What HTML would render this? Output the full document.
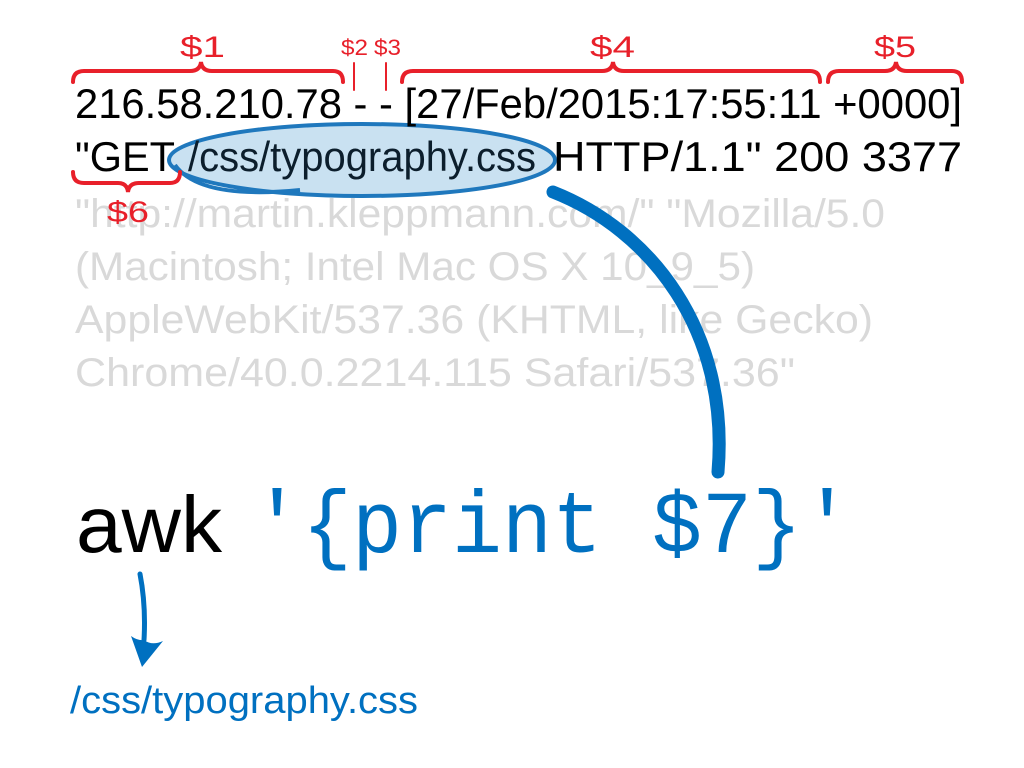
<!DOCTYPE html>
<html><head><meta charset="utf-8"><style>
html,body{margin:0;padding:0;background:#fff;}
svg{display:block;}
text{font-family:"Liberation Sans",sans-serif;}
</style></head><body>
<svg width="1024" height="768" viewBox="0 0 1024 768" xmlns="http://www.w3.org/2000/svg">
<!-- gray lines -->
<g fill="#d9d9d9" font-size="40">
<text x="75" y="227" textLength="810" lengthAdjust="spacingAndGlyphs">"http://martin.kleppmann.com/" "Mozilla/5.0</text>
<text x="75" y="280" textLength="680" lengthAdjust="spacingAndGlyphs">(Macintosh; Intel Mac OS X 10_9_5)</text>
<text x="75" y="333" textLength="798" lengthAdjust="spacingAndGlyphs">AppleWebKit/537.36 (KHTML, like Gecko)</text>
<text x="75" y="386" textLength="720" lengthAdjust="spacingAndGlyphs">Chrome/40.0.2214.115 Safari/537.36"</text>
</g>
<!-- ellipse -->
<ellipse cx="362" cy="160" rx="193" ry="36" fill="#c9e1f1" stroke="#1f78bd" stroke-width="4"/>
<path d="M175 165 Q200 200 300 190" fill="none" stroke="#1f78bd" stroke-width="4"/>
<!-- main text -->
<g fill="#000" font-size="42">
<text x="75" y="118" textLength="887" lengthAdjust="spacingAndGlyphs">216.58.210.78 - - [27/Feb/2015:17:55:11 +0000]</text>
<text x="75" y="171" textLength="100" lengthAdjust="spacingAndGlyphs">"GET</text>
<text x="188" y="171" textLength="348" lengthAdjust="spacingAndGlyphs" fill="#0c1e2c">/css/typography.css</text>
<text x="553" y="171" textLength="409" lengthAdjust="spacingAndGlyphs">HTTP/1.1" 200 3377</text>
</g>
<!-- red braces -->
<g fill="none" stroke="#e8202a" stroke-width="4" stroke-linecap="round">
<path d="M73 82 Q73 71 84 71 L190 71 Q200 71 201 62 Q202 71 212 71 L333 71 Q343 71 343 82"/>
<path d="M402 82 Q402 71 413 71 L602 71 Q612 71 613 62 Q614 71 624 71 L810 71 Q820 71 820 82"/>
<path d="M828 82 Q828 71 839 71 L885 71 Q895 71 896 62 Q897 71 907 71 L952 71 Q962 71 962 82"/>
<path d="M73 172 Q73 183 84 183 L118 183 Q127 183 128 192 Q129 183 139 183 L170 183 Q180 183 180 172"/>
<path d="M354 63 L354 90 M386 63 L386 90" stroke-width="2"/>
</g>
<g fill="#e8202a">
<text x="180" y="57" font-size="30" textLength="45" lengthAdjust="spacingAndGlyphs">$1</text>
<text x="341" y="55" font-size="22" textLength="27" lengthAdjust="spacingAndGlyphs">$2</text>
<text x="374" y="55" font-size="22" textLength="27" lengthAdjust="spacingAndGlyphs">$3</text>
<text x="590" y="57" font-size="30" textLength="45" lengthAdjust="spacingAndGlyphs">$4</text>
<text x="874" y="57" font-size="30" textLength="42" lengthAdjust="spacingAndGlyphs">$5</text>
<text x="107" y="222" font-size="30" textLength="42" lengthAdjust="spacingAndGlyphs">$6</text>
</g>
<!-- big curve -->
<path d="M553 192 C650 230 730 330 718 472" fill="none" stroke="#0070c0" stroke-width="13" stroke-linecap="round"/>
<!-- awk -->
<text x="76" y="552" font-size="80" textLength="146" lengthAdjust="spacingAndGlyphs" fill="#000">awk</text>
<text x="252" y="552" font-family="Liberation Mono, monospace" font-size="88" textLength="600" lengthAdjust="spacingAndGlyphs" fill="#0070c0" style="font-family:'Liberation Mono',monospace">'{print $7}'</text>
<!-- small arrow -->
<path d="M140 574 Q146 605 144 640" fill="none" stroke="#0070c0" stroke-width="5" stroke-linecap="round"/>
<path d="M131 636 L142 667 L163 641 Q152 646 144 640 Q138 641 131 636 Z" fill="#0070c0"/>
<text x="70" y="713" font-size="38" textLength="348" lengthAdjust="spacingAndGlyphs" fill="#0070c0">/css/typography.css</text>
</svg>
</body></html>
